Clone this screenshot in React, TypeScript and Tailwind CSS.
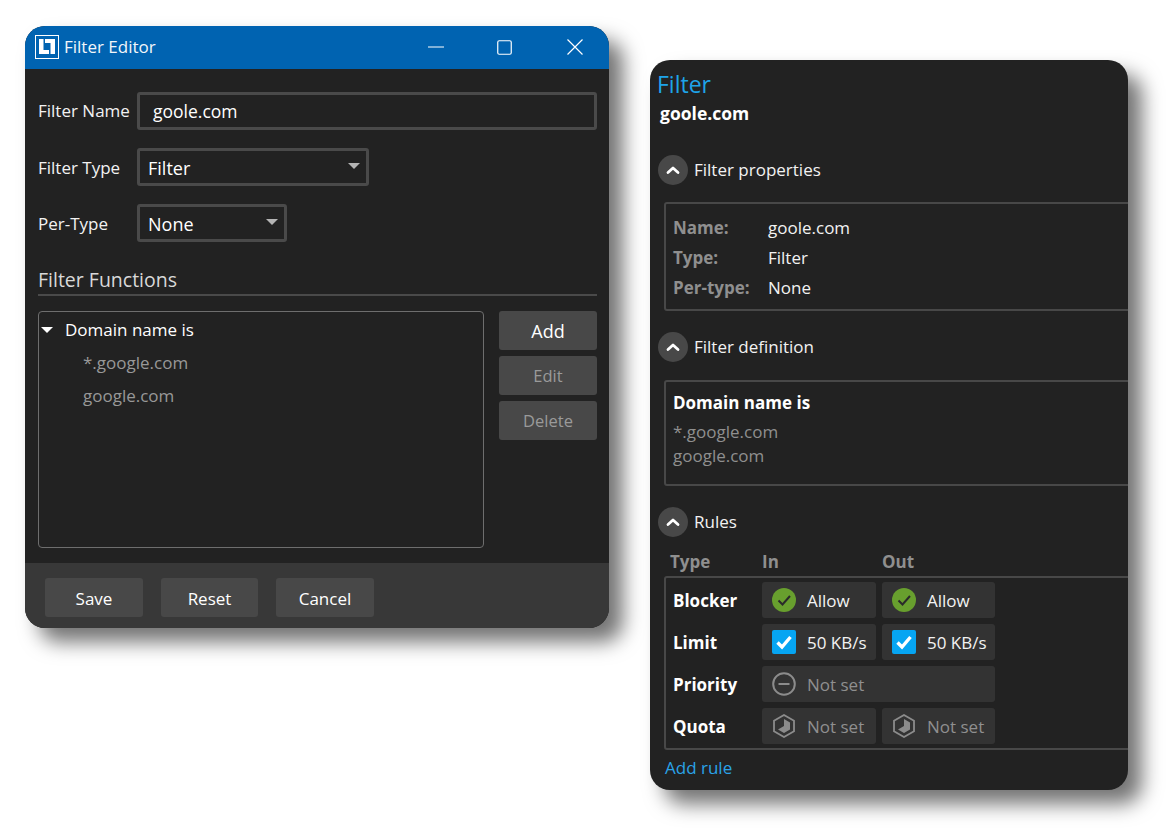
import React from 'react';

const font = { fontFamily: '"Open Sans", "Noto Sans", sans-serif' };

const Caret = ({ className }: { className: string }) => (
  <svg width="12" height="6" viewBox="0 0 12 6" className={className}>
    <path d="M0 0h12L6 6z" fill="currentColor" />
  </svg>
);

const Logo = () => (
  <svg width="24" height="24" viewBox="0 0 24 24" className="shrink-0">
    <rect x="0.5" y="0.5" width="23" height="23" fill="none" stroke="#fff" />
    <path d="M4 4h4.5v11H14v4H4zM10 4h10v15h-4.5V8H10z" fill="#fff" />
  </svg>
);

const Chevron = () => (
  <div className="flex h-[30px] w-[30px] shrink-0 items-center justify-center rounded-full bg-[#484848]">
    <svg width="14" height="9" viewBox="0 0 14 9">
      <path d="M2 6.5l5-4.5 5 4.5" fill="none" stroke="#fff" strokeWidth="2.8" strokeLinecap="round" strokeLinejoin="round" />
    </svg>
  </div>
);

const SelectBox = ({ value, width }: { value: string; width: string }) => (
  <div className={`flex h-[38px] items-center justify-between rounded-[3px] border-[3px] border-[#4a4a4a] pl-[8px] pr-[6px] text-[18px] text-white ${width}`}>
    <span className="pt-[2px]">{value}</span>
    <Caret className="mb-[2px] text-[#b4b4b4]" />
  </div>
);

const FormRow = ({ label, children, className, labelClass }: { label: string; children: React.ReactNode; className: string; labelClass?: string }) => (
  <div className={`flex items-center ${className}`}>
    <div className={`w-[99px] shrink-0 text-[#f2f2f2] ${labelClass ?? ''}`}>{label}</div>
    {children}
  </div>
);

const SideButton = ({ label, className }: { label: string; className: string }) => (
  <div className={`flex h-[39px] w-[98px] items-center justify-center rounded-[3px] bg-[#484848] pt-[2px] ${className}`}>
    {label}
  </div>
);

const FootButton = ({ label, width }: { label: string; width: string }) => (
  <div className={`flex h-[39px] items-center justify-center rounded-[3px] bg-[#484848] pt-[2px] text-white ${width}`}>{label}</div>
);

const SectionHead = ({ label, className }: { label: string; className: string }) => (
  <div className={`flex items-center gap-[6px] text-[#f2f2f2] ${className}`}>
    <Chevron />
    <span>{label}</span>
  </div>
);

const CheckCircle = () => (
  <svg width="24" height="24" viewBox="0 0 24 24">
    <circle cx="12" cy="12" r="12" fill="#689f2e" />
    <path d="M6.5 12.5l4 4 7.5-8.5" fill="none" stroke="#2a2a2a" strokeWidth="2" />
  </svg>
);

const CheckBox = () => (
  <svg width="24" height="24" viewBox="0 0 24 24">
    <rect width="24" height="24" rx="2" fill="#06a5f2" />
    <path d="M5.5 12.5l4.5 4.5 8.5-10" fill="none" stroke="#fff" strokeWidth="3.4" />
  </svg>
);

const MinusCircle = () => (
  <svg width="24" height="24" viewBox="0 0 24 24">
    <circle cx="12" cy="12" r="10.8" fill="none" stroke="#8c8c8c" strokeWidth="2" />
    <path d="M6.5 12h11" stroke="#8c8c8c" strokeWidth="2" />
  </svg>
);

const Hexagon = () => (
  <svg width="24" height="24" viewBox="0 0 24 24">
    <path d="M12 1l10 5.7v10.6L12 23 2 17.3V6.7z" fill="none" stroke="#8c8c8c" strokeWidth="1.8" />
    <path d="M12 5l6 3.4v7.2L12 19l-6-3.4 6-3.6z" fill="#8c8c8c" />
  </svg>
);

const RuleCell = ({ icon, label, dim, wide }: { icon: React.ReactNode; label: string; dim?: boolean; wide?: boolean }) => (
  <div className={`flex h-[36px] items-center gap-[11px] rounded-[3px] bg-[#333333] pl-[10px] text-[17px] ${dim ? 'text-[#8f8f8f]' : 'text-[#f2f2f2]'} ${wide ? 'col-span-2 w-[233px]' : ''}`}>
    {icon}
    <span className="pt-[1px]">{label}</span>
  </div>
);

const RuleLabel = ({ label }: { label: string }) => <div className="pt-[2px] text-[17px] font-bold text-white">{label}</div>;

const FilterEditor = () => (
  <div className="mt-[26px] flex h-[602px] w-[584px] shrink-0 flex-col overflow-hidden rounded-[20px] bg-[#222222] shadow-[14px_14px_20px_rgba(0,0,0,0.55)]">
    <div className="flex h-[43px] shrink-0 items-center bg-[#0063b1] pb-[1px] pl-[10px] text-[#f2f6fa]">
      <Logo />
      <span className="ml-[5px] text-[17px]">Filter Editor</span>
      <svg width="16" height="2" viewBox="0 0 16 2" className="ml-auto">
        <path d="M0 1h16" stroke="#fff" strokeWidth="1.2" />
      </svg>
      <svg width="15" height="15" viewBox="0 0 15 15" className="ml-[53px]">
        <rect x="0.75" y="0.75" width="13.5" height="13.5" rx="1.5" fill="none" stroke="#fff" strokeWidth="1.2" />
      </svg>
      <svg width="16" height="16" viewBox="0 0 16 16" className="ml-[55px] mr-[26px]">
        <path d="M0.5 0.5l15 15M15.5 0.5l-15 15" stroke="#fff" strokeWidth="1.2" />
      </svg>
    </div>

    <div className="flex min-h-0 flex-1 flex-col pl-[13px] pr-[12px] text-[17px]">
      <FormRow label="Filter Name" className="mt-[23px]">
        <div className="flex h-[38px] w-[460px] items-center rounded-[3px] border-[3px] border-[#4a4a4a] pl-[13px] text-[17.5px] text-white">
          goole.com
        </div>
      </FormRow>
      <FormRow label="Filter Type" labelClass="pt-[2px]" className="mt-[18px]">
        <SelectBox value="Filter" width="w-[232px]" />
      </FormRow>
      <FormRow label="Per-Type" labelClass="pt-[2px]" className="mt-[18px]">
        <SelectBox value="None" width="w-[150px]" />
      </FormRow>

      <div className="mt-[24px] border-b-2 border-[#4a4a4a] text-[19.5px] leading-[28px] text-[#d9d9d9]">Filter Functions</div>

      <div className="mt-[15px] flex gap-[15px]">
        <div className="h-[237px] w-[446px] rounded-[4px] border border-[#6e6e6e] pt-[1px]">
          <div className="flex h-[33px] items-center text-white">
            <Caret className="ml-[2px] text-white" />
            <span className="ml-[12px]">Domain name is</span>
          </div>
          <div className="flex h-[33px] items-center pl-[44px] text-[#989898]">*.google.com</div>
          <div className="flex h-[33px] items-center pl-[44px] text-[#989898]">google.com</div>
        </div>
        <div className="flex flex-col gap-[6px]">
          <SideButton label="Add" className="text-[18px] text-white" />
          <SideButton label="Edit" className="text-[16.5px] text-[#9a9a9a]" />
          <SideButton label="Delete" className="text-[16.5px] text-[#9a9a9a]" />
        </div>
      </div>
    </div>

    <div className="flex h-[65px] shrink-0 items-start bg-[#383838] pl-[20px] pt-[15px] text-[17px]">
      <FootButton label="Save" width="w-[98px]" />
      <FootButton label="Reset" width="ml-[18px] w-[97px]" />
      <FootButton label="Cancel" width="ml-[18px] w-[98px]" />
    </div>
  </div>
);

const FilterPanel = () => (
  <div className="ml-[41px] mt-[60px] flex h-[730px] w-[478px] shrink-0 flex-col overflow-hidden rounded-[20px] bg-[#222222] text-[17px] shadow-[14px_14px_20px_rgba(0,0,0,0.55)]">
    <div className="pl-[7px] pt-[8px] text-[23px] leading-[32px] text-[#1ea4ea]">Filter</div>
    <div className="pl-[10px] pt-[1px] text-[17.5px] font-bold leading-[24px] text-white">goole.com</div>

    <SectionHead label="Filter properties" className="ml-[8px] mt-[30px]" />
    <div className="ml-[14px] mt-[17px] h-[109px] w-[520px] shrink-0 rounded-[3px] border-2 border-[#484848] pl-[7px] pt-[9px] leading-[30px]">
      <div className="grid grid-cols-[95px_1fr]">
        <span className="font-bold text-[#8f8f8f]">Name:</span>
        <span className="text-[#f2f2f2]">goole.com</span>
        <span className="font-bold text-[#8f8f8f]">Type:</span>
        <span className="text-[#f2f2f2]">Filter</span>
        <span className="font-bold text-[#8f8f8f]">Per-type:</span>
        <span className="text-[#f2f2f2]">None</span>
      </div>
    </div>

    <SectionHead label="Filter definition" className="ml-[8px] mt-[21px]" />
    <div className="ml-[14px] mt-[18px] h-[106px] w-[520px] shrink-0 rounded-[3px] border-2 border-[#484848] pl-[7px] pt-[9px] leading-[24px]">
      <div className="pb-[5px] font-bold text-white">Domain name is</div>
      <div className="text-[#8f8f8f]">*.google.com</div>
      <div className="text-[#8f8f8f]">google.com</div>
    </div>

    <SectionHead label="Rules" className="ml-[8px] mt-[21px]" />
    <div className="ml-[20px] mt-[13px] grid shrink-0 grid-cols-[92px_120px_1fr] font-bold leading-[24px] text-[#8f8f8f]">
      <span>Type</span>
      <span>In</span>
      <span>Out</span>
    </div>
    <div className="ml-[14px] mt-[2px] h-[174px] w-[520px] shrink-0 rounded-[3px] border-2 border-[#484848] pl-[7px] pt-[4px]">
      <div className="grid grid-cols-[83px_114px_113px] items-center gap-x-[6px] gap-y-[6px]">
        <RuleLabel label="Blocker" />
        <RuleCell icon={<CheckCircle />} label="Allow" />
        <RuleCell icon={<CheckCircle />} label="Allow" />
        <RuleLabel label="Limit" />
        <RuleCell icon={<CheckBox />} label="50 KB/s" />
        <RuleCell icon={<CheckBox />} label="50 KB/s" />
        <RuleLabel label="Priority" />
        <RuleCell icon={<MinusCircle />} label="Not set" dim wide />
        <RuleLabel label="Quota" />
        <RuleCell icon={<Hexagon />} label="Not set" dim />
        <RuleCell icon={<Hexagon />} label="Not set" dim />
      </div>
    </div>
    <div className="ml-[15px] mt-[6px] leading-[24px] text-[#2aa3e8]">Add rule</div>
  </div>
);

export default function App() {
  return (
    <div className="flex h-[830px] w-[1169px] items-start overflow-hidden bg-white pl-[25px]" style={font}>
      <FilterEditor />
      <FilterPanel />
    </div>
  );
}
